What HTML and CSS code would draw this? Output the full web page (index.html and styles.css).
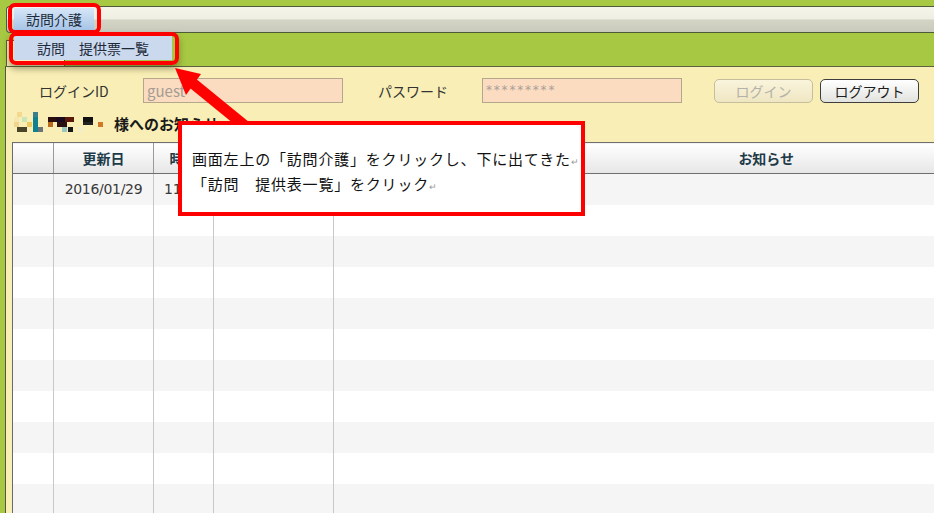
FILE: index.html
```html
<!DOCTYPE html>
<html lang="ja">
<head>
    <meta charset="UTF-8">
    <title>訪問介護 - お知らせ</title>
    <link rel="stylesheet" href="styles.css">
</head>
<body>
    <div class="page">
        <!-- Menu bar -->
        <div class="menubar">
            <div class="menu-item">訪問介護</div>
        </div>

        <!-- Tabs -->
        <div class="tabs">
            <div class="tab"></div>
        </div>

        <!-- Main panel -->
        <div class="panel">
            <div class="login-row">
                <span class="label label-id">ログインID</span>
                <input class="field" type="text" placeholder="guest">
                <span class="label label-pw">パスワード</span>
                <div class="field pw">*********</div>
                <button class="btn btn-login" disabled>ログイン</button>
                <button class="btn btn-logout">ログアウト</button>
            </div>

            <div class="notice-title">
                <svg class="name-blur" width="92" height="22" viewBox="0 0 92 22">
                    <rect x="3" y="0" width="5" height="5" fill="#f2d98e"/>
                    <rect x="19" y="0" width="5" height="5" fill="#3b7f8a"/>
                    <rect x="0" y="5" width="5" height="5" fill="#f5e7b0"/>
                    <rect x="8" y="5" width="5" height="5" fill="#c8e6b8"/>
                    <rect x="19" y="5" width="5" height="5" fill="#107f90"/>
                    <rect x="34" y="5" width="8" height="5" fill="#2a0e0e"/>
                    <rect x="42" y="5" width="9" height="5" fill="#1a0a20"/>
                    <rect x="51" y="5" width="9" height="5" fill="#5a1a0a"/>
                    <rect x="69" y="5" width="10" height="5" fill="#111"/>
                    <rect x="0" y="10" width="5" height="5" fill="#f3d48c"/>
                    <rect x="13" y="10" width="5" height="5" fill="#f0c860"/>
                    <rect x="19" y="10" width="5" height="5" fill="#107f90"/>
                    <rect x="34" y="10" width="5" height="5" fill="#b86a20"/>
                    <rect x="43" y="10" width="10" height="5" fill="#2a1010"/>
                    <rect x="69" y="10" width="10" height="3" fill="#222"/>
                    <rect x="84" y="10" width="5" height="5" fill="#d07a28"/>
                    <rect x="3" y="15" width="10" height="5" fill="#4a4428"/>
                    <rect x="19" y="15" width="5" height="5" fill="#107f90"/>
                    <rect x="24" y="15" width="5" height="5" fill="#6a7478"/>
                    <rect x="48" y="15" width="5" height="5" fill="#9ac8c0"/>
                    <rect x="54" y="15" width="5" height="5" fill="#161616"/>
                    <rect x="64" y="15" width="5" height="5" fill="#f3ecc8"/>
                </svg>
                <span>様へのお知らせ</span>
            </div>

            <div class="table-wrap">
                <table class="notice-table">
                    <colgroup>
                        <col class="c-no">
                        <col class="c-date">
                        <col class="c-time">
                        <col class="c-who">
                        <col class="c-body">
                    </colgroup>
                    <thead>
                        <tr>
                            <th></th>
                            <th>更新日</th>
                            <th>時間</th>
                            <th>発信者</th>
                            <th>お知らせ</th>
                        </tr>
                    </thead>
                    <tbody>
                        <tr><td></td><td class="num">2016/01/29</td><td class="num">11:00</td><td></td><td></td></tr>
                        <tr><td></td><td></td><td></td><td></td><td></td></tr>
                        <tr><td></td><td></td><td></td><td></td><td></td></tr>
                        <tr><td></td><td></td><td></td><td></td><td></td></tr>
                        <tr><td></td><td></td><td></td><td></td><td></td></tr>
                        <tr><td></td><td></td><td></td><td></td><td></td></tr>
                        <tr><td></td><td></td><td></td><td></td><td></td></tr>
                        <tr><td></td><td></td><td></td><td></td><td></td></tr>
                        <tr><td></td><td></td><td></td><td></td><td></td></tr>
                        <tr><td></td><td></td><td></td><td></td><td></td></tr>
                        <tr><td></td><td></td><td></td><td></td><td></td></tr>
                    </tbody>
                </table>
            </div>
        </div>

        <!-- Dropdown menu -->
        <div class="dropdown">訪問　提供票一覧</div>

        <!-- Annotations -->
        <div class="mark mark-menu"></div>
        <div class="mark mark-drop"></div>
        <svg class="arrow" width="300" height="200" viewBox="0 0 300 200">
            <line x1="255" y1="134" x2="190" y2="81" stroke="#ff0000" stroke-width="11"/>
            <polygon points="175,68 201,74 186,95" fill="#ff0000"/>
        </svg>
        <div class="callout">
            <p>画面左上の「訪問介護」をクリックし、下に出てきた<span class="ret">↵</span></p>
            <p>「訪問　提供表一覧」をクリック<span class="ret">↵</span></p>
        </div>
    </div>
</body>
</html>
```

FILE: styles.css
```css
* {
    box-sizing: border-box;
    margin: 0;
    padding: 0;
}
body {
    font-family: 'Noto Sans CJK JP', 'Noto Sans', sans-serif;
    background: #a6c842;
    color: #2d2d2d;
    font-size: 14px;
    overflow: hidden;
}
.page {
    position: relative;
    width: 934px;
    height: 513px;
    overflow: hidden;
}

/* Menu bar */
.menubar {
    margin: 6px 0 0 6px;
    height: 27px;
    width: 1000px;
    border: 1px solid #4e5a3a;
    border-right: none;
    border-radius: 4px 0 0 4px;
    background: linear-gradient(#f4f4ea 0%, #eeeee2 48%, #d3d4c4 52%, #c9cabb 100%);
    padding: 1px 0 0 7px;
}
.menu-item {
    width: 80px;
    height: 23px;
    line-height: 23px;
    text-align: center;
    color: #1c2a3a;
    background: linear-gradient(#d6e6f7, #a4c3e6);
}

/* Tabs */
.tabs {
    height: 33px;
    padding: 7px 0 0 6px;
}
.tab {
    width: 59px;
    height: 26px;
    background: #f9efb6;
    border: 1px solid #5d5a3a;
    border-bottom: none;
}

/* Main panel */
.panel {
    margin-left: 5px;
    height: 460px;
    background: #f9efb6;
    border-top: 1px solid #5d6340;
    border-left: 1px solid #55554a;
    padding-top: 11px;
}
.login-row {
    display: flex;
    align-items: center;
    height: 25px;
}
.label {
    width: 104px;
    font-size: 14px;
    color: #333;
}
.label-id {
    margin-left: 33px;
}
.label-pw {
    margin-left: 35px;
}
.field {
    width: 200px;
    height: 25px;
    background: #fcdcc0;
    border: 1px solid #b4a88c;
    font-family: inherit;
    font-size: 15px;
    padding: 0 3px;
    outline: none;
}
.field::placeholder {
    color: #a39c94;
}
.pw {
    color: #a8a098;
    font-size: 12px;
    letter-spacing: 1.8px;
    line-height: 22px;
    font-family: 'DejaVu Sans', sans-serif;
}
.btn {
    width: 99px;
    height: 24px;
    border-radius: 5px;
    font-family: inherit;
    font-size: 14px;
}
.btn-login {
    margin-left: 32px;
    background: linear-gradient(#f9f4dc, #efe6c2);
    border: 1px solid #c6bd9c;
    color: #b4b2a8;
}
.btn-logout {
    margin-left: 7px;
    background: linear-gradient(#ffffff, #e2e2de);
    border: 1px solid #3e3e3e;
    color: #1e1e1e;
}

/* Notice title */
.notice-title {
    display: flex;
    align-items: center;
    height: 22px;
    margin: 9px 0 0 8px;
    font-size: 15px;
    font-weight: 700;
    color: #1a1a1a;
}
.name-blur {
    margin-right: 8px;
}

/* Table */
.table-wrap {
    margin: 8px 0 0 6px;
    width: 1200px;
}
.notice-table {
    border-collapse: collapse;
    table-layout: fixed;
    width: 1186px;
    border-left: 1px solid #6a6a6a;
}
.c-no { width: 41px; }
.c-date { width: 100px; }
.c-time { width: 60px; }
.c-who { width: 120px; }
.c-body { width: 865px; }
.notice-table th {
    height: 31px;
    background: linear-gradient(#ffffff, #e6e6e6);
    border-top: 1px solid #6e6e6e;
    border-bottom: 1px solid #6e6e6e;
    border-left: 1px solid #9a9a9a;
    color: #1d3a48;
    font-weight: 700;
    font-size: 14px;
}
.notice-table td {
    height: 31px;
    border-left: 1px solid #c8c8c8;
    text-align: center;
    color: #333;
    font-size: 14px;
    white-space: nowrap;
    overflow: hidden;
}
.notice-table td.num {
    font-family: 'DejaVu Sans', sans-serif;
    font-size: 14px;
    letter-spacing: -0.3px;
    color: #3a3a3a;
}
.notice-table tbody tr:nth-child(odd) td {
    background: #f5f5f5;
}
.notice-table tbody tr:nth-child(even) td {
    background: #fff;
}
.notice-table th:first-child,
.notice-table td:first-child {
    border-left: none;
}

/* Dropdown */
.dropdown {
    position: absolute;
    left: 14px;
    top: 36px;
    width: 158px;
    height: 24px;
    line-height: 24px;
    text-align: center;
    background: #cbd9ef;
    color: #1c2a3a;
}

/* Annotations */
.mark {
    position: absolute;
    border: 4px solid #ff0000;
    border-radius: 7px;
}
.mark-menu {
    left: 8px;
    top: 3px;
    width: 93px;
    height: 31px;
}
.mark-drop {
    left: 9px;
    top: 32px;
    width: 170px;
    height: 33px;
    box-shadow: 0 4px 6px rgba(60, 60, 30, 0.45);
}
.arrow {
    position: absolute;
    left: 0;
    top: 0;
}
.callout {
    position: absolute;
    left: 178px;
    top: 121px;
    width: 407px;
    height: 95px;
    background: #fff;
    border: 4px solid #ff0000;
    padding: 23px 0 0 10px;
    font-size: 15px;
    letter-spacing: 0.8px;
    line-height: 22px;
    color: #111;
    white-space: nowrap;
}
.ret {
    color: #999;
    font-size: 9px;
    letter-spacing: 0;
}
```
